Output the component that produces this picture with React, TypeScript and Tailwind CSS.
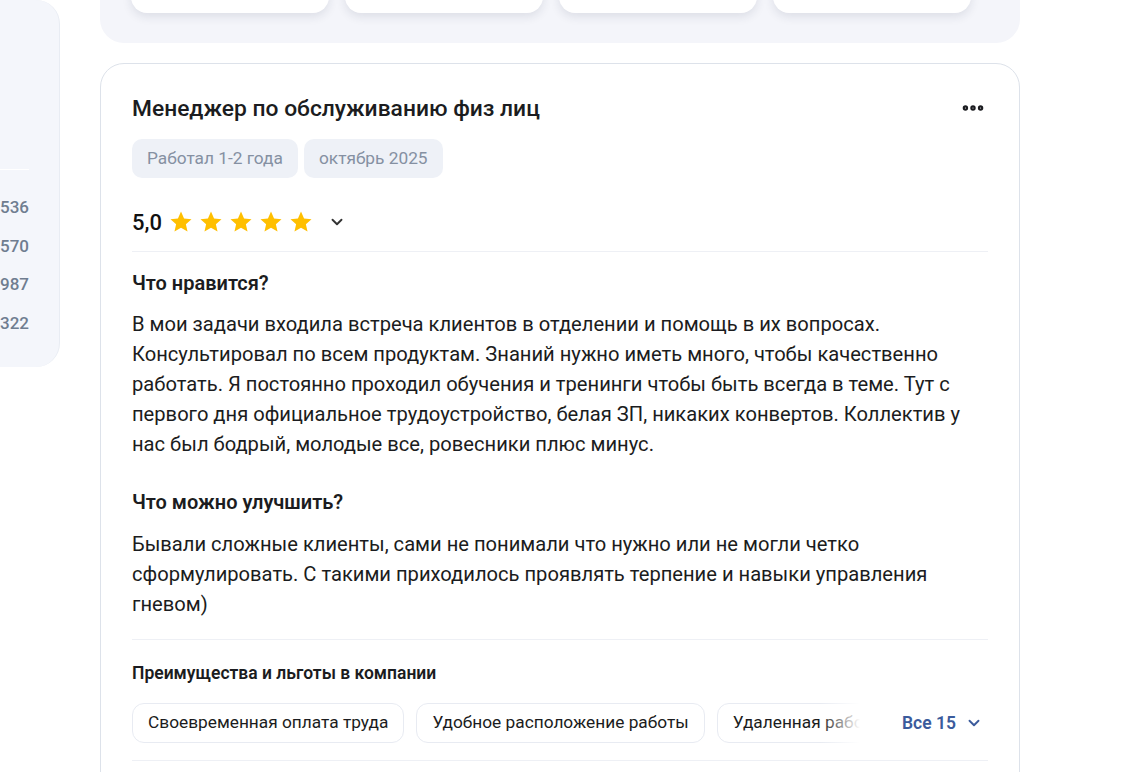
import { ChevronDown, Ellipsis } from "lucide-react";

const topCards = [0, 1, 2, 3];
const leftStats = ["536", "570", "987", "322"];
const perks = [
  "Своевременная оплата труда",
  "Удобное расположение работы",
  "Удаленная работа",
];

const Star = () => (
  <svg width="24" height="24" viewBox="0 0 24 24" fill="#ffbf00">
    <path d="M12 1.6l3.05 6.85 7.45.72-5.62 4.98 1.65 7.3L12 17.65 5.47 21.45l1.65-7.3L1.5 9.17l7.45-.72z" />
  </svg>
);

const App = () => {
  return (
    <div
      className="w-[1141px] h-[772px] overflow-hidden bg-white flex items-start"
      style={{ fontFamily: "Roboto, 'Noto Sans', sans-serif" }}
    >
      {/* левая колонка */}
      <div className="w-[60px] shrink-0">
        <div className="h-[367px] bg-[#f4f6fb] rounded-tr-[24px] rounded-br-[24px] border-r border-[#e8ecf3] pr-[30px] flex flex-col">
          <div className="h-[170px] shrink-0 border-b border-white" />
          <div className="flex flex-col items-end pt-[27px] gap-[18.5px]">
            {leftStats.map((n) => (
              <span key={n} className="text-[17px] leading-[20px] font-medium text-[#6f7d90]">
                {n}
              </span>
            ))}
          </div>
        </div>
      </div>

      {/* основная колонка */}
      <div className="w-[920px] ml-[40px] shrink-0 flex flex-col">
        <div className="h-[43px] shrink-0 bg-[#f4f5fa] rounded-b-[24px] pl-[31px] flex gap-[16px]">
          {topCards.map((i) => (
            <div
              key={i}
              className="w-[198px] h-[60px] shrink-0 mt-[-47px] bg-white rounded-[16px] shadow-[0_4px_10px_rgba(30,40,70,0.10)]"
            />
          ))}
        </div>

        <div className="mt-[20px] shrink-0 border border-[#dde2ea] rounded-[24px] px-[31px] pt-[31px] pb-[40px]">
          <div className="flex items-start justify-between">
            <h2 className="text-[22.8px] leading-[28px] font-medium text-[#1b1c20]">
              Менеджер по обслуживанию физ лиц
            </h2>
            <Ellipsis className="w-[26px] h-[26px] text-[#1b1c20] mt-[0px] mr-[2px]" strokeWidth={3} />
          </div>

          <div className="flex gap-[6px] mt-[16px]">
            <span className="h-[39px] px-[15px] flex items-center rounded-[10px] bg-[#eef1f7] text-[17.3px] text-[#8590a2]">
              Работал 1-2 года
            </span>
            <span className="h-[39px] px-[15px] flex items-center rounded-[10px] bg-[#eef1f7] text-[17.3px] text-[#8590a2]">
              октябрь 2025
            </span>
          </div>

          <div className="flex items-center mt-[31px] h-[26px]">
            <span className="text-[22px] font-medium text-[#111] mr-[7px]">5,0</span>
            <div className="flex gap-[6px]">
              <Star />
              <Star />
              <Star />
              <Star />
              <Star />
            </div>
            <ChevronDown className="w-[18px] h-[18px] ml-[15px] text-[#333]" strokeWidth={2.5} />
          </div>

          <div className="h-px bg-[#eef0f5] mt-[16px]" />

          <h3 className="mt-[19px] text-[20px] leading-[24px] font-semibold text-[#1b1c20]">
            Что нравится?
          </h3>
          <p className="mt-[14px] text-[20.15px] leading-[30px] text-[#1b1c20] whitespace-nowrap">
            В мои задачи входила встреча клиентов в отделении и помощь в их вопросах.
            <br />
            Консультировал по всем продуктам. Знаний нужно иметь много, чтобы качественно
            <br />
            работать. Я постоянно проходил обучения и тренинги чтобы быть всегда в теме. Тут с
            <br />
            первого дня официальное трудоустройство, белая ЗП, никаких конвертов. Коллектив у
            <br />
            нас был бодрый, молодые все, ровесники плюс минус.
          </p>

          <h3 className="mt-[31px] text-[20px] leading-[24px] font-semibold text-[#1b1c20]">
            Что можно улучшить?
          </h3>
          <p className="mt-[15px] text-[20.15px] leading-[30px] text-[#1b1c20] whitespace-nowrap">
            Бывали сложные клиенты, сами не понимали что нужно или не могли четко
            <br />
            сформулировать. С такими приходилось проявлять терпение и навыки управления
            <br />
            гневом)
          </p>

          <div className="h-px bg-[#eef0f5] mt-[20px]" />

          <h4 className="mt-[22px] text-[17.5px] leading-[22px] font-semibold text-[#1b1c20]">
            Преимущества и льготы в компании
          </h4>

          <div className="flex items-center mt-[19px]">
            <div className="relative w-[728px] overflow-hidden">
              <div className="flex gap-[12px] w-max">
                {perks.map((p) => (
                  <span
                    key={p}
                    className="h-[40px] px-[15px] flex items-center rounded-[12px] border border-[#e8ebf2] text-[17.3px] text-[#1b1c20] whitespace-nowrap"
                  >
                    {p}
                  </span>
                ))}
              </div>
              <div className="absolute right-0 top-0 h-full w-[40px] bg-gradient-to-r from-transparent to-white" />
            </div>
            <button className="ml-[42px] flex items-center gap-[9px] text-[17.5px] font-semibold text-[#3b5b9c]">
              Все 15
              <ChevronDown className="w-[18px] h-[18px]" strokeWidth={2.5} />
            </button>
          </div>

          <div className="h-px bg-[#eef0f5] mt-[17px]" />
        </div>
      </div>
    </div>
  );
};

export default App;
